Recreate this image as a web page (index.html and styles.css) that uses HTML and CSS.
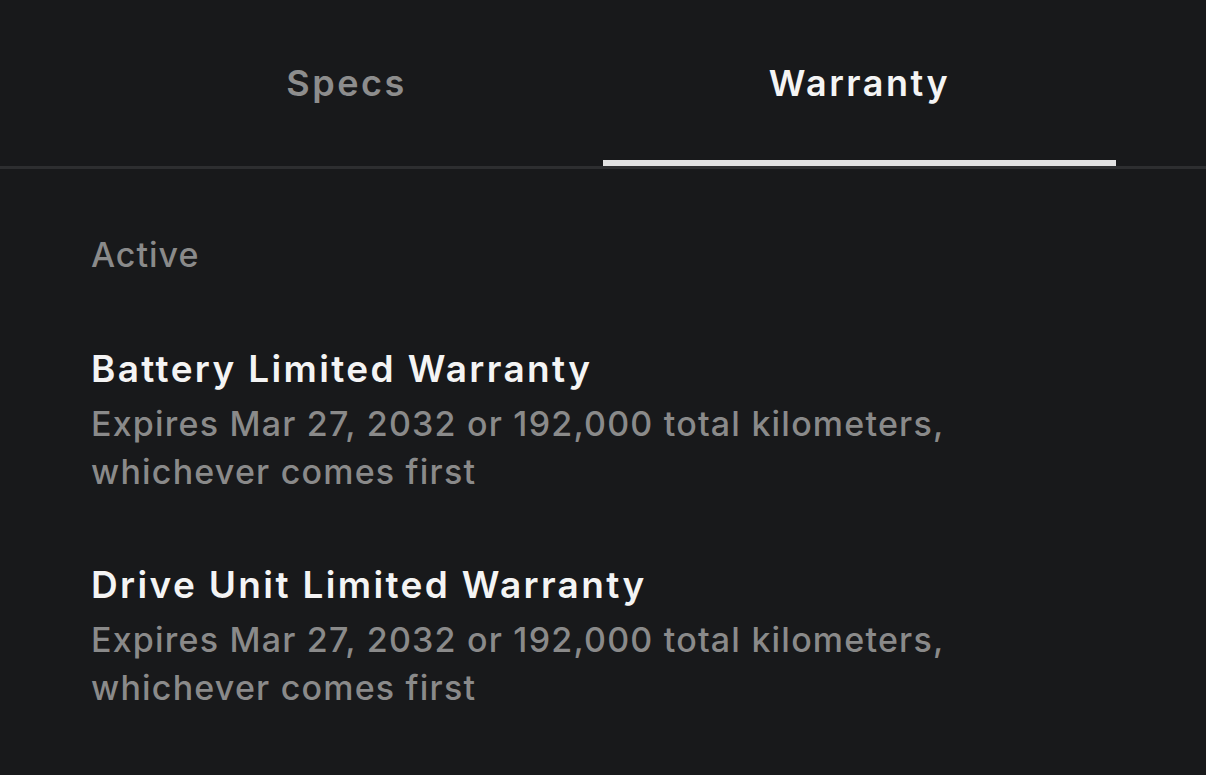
FILE: index.html
```html
<!DOCTYPE html>
<html>
<head>
<meta charset="utf-8">
<link rel="stylesheet" href="styles.css">
</head>
<body>
<div class="page">
  <nav class="tabs">
    <div class="tab">Specs</div>
    <div class="tab active">Warranty</div>
  </nav>
  <main class="content">
    <div class="section-label">Active</div>
    <div class="item">
      <div class="item-title">Battery Limited Warranty</div>
      <div class="item-desc">Expires Mar 27, 2032 or 192,000 total kilometers,<br>whichever comes first</div>
    </div>
    <div class="item">
      <div class="item-title">Drive Unit Limited Warranty</div>
      <div class="item-desc">Expires Mar 27, 2032 or 192,000 total kilometers,<br>whichever comes first</div>
    </div>
  </main>
</div>
</body>
</html>
```

FILE: styles.css
```css
html, body {
  margin: 0;
  padding: 0;
  background: #18191b;
}
body {
  font-family: Inter, "Noto Sans", sans-serif;
  width: 1206px;
  height: 775px;
  overflow: hidden;
}
.page {
  display: flex;
  flex-direction: column;
}
.tabs {
  display: flex;
  padding: 0 90px;
  border-bottom: 3px solid #2d2e30;
}
.tab {
  flex: 1;
  height: 166px;
  box-sizing: border-box;
  padding-top: 61px;
  text-align: center;
  font-size: 36px;
  line-height: 44px;
  font-weight: 600;
  color: #8d8d8d;
  letter-spacing: 2.5px;
}
.tab.active {
  color: #f4f4f4;
  box-shadow: inset 0 -6px 0 #e2e2e2;
}
.content {
  padding: 66px 91px 0;
  display: flex;
  flex-direction: column;
  gap: 67px;
}
.section-label {
  font-size: 34px;
  line-height: 40px;
  font-weight: 500;
  color: #8a8a8a;
  letter-spacing: 1px;
  margin-bottom: 5px;
}
.item {
  display: flex;
  flex-direction: column;
  gap: 9px;
}
.item-title {
  font-size: 37px;
  line-height: 44px;
  font-weight: 600;
  color: #f4f4f4;
  letter-spacing: 2.35px;
}
.item-desc {
  font-size: 34px;
  line-height: 48px;
  font-weight: 500;
  color: #8a8a8a;
  letter-spacing: 1.2px;
}
```
